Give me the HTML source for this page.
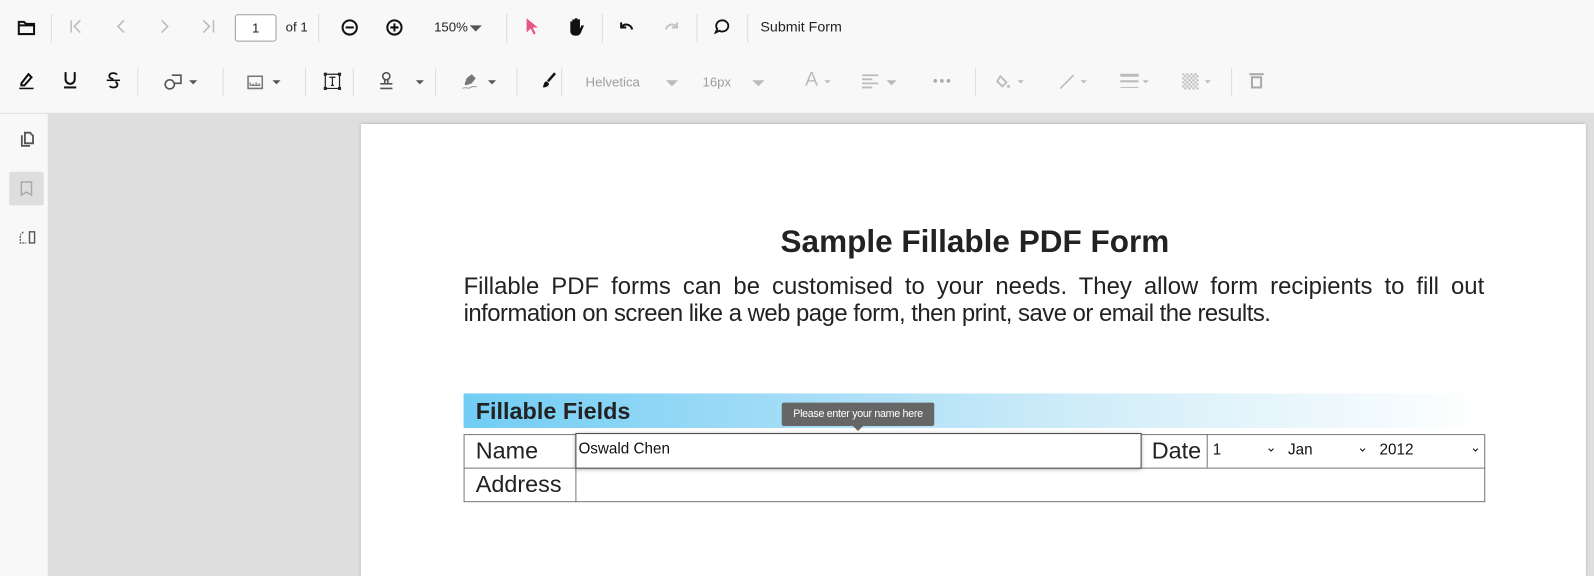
<!DOCTYPE html>
<html><head><meta charset="utf-8"><style>
*{box-sizing:border-box;margin:0;padding:0}
body{width:1594px;height:567px;overflow:hidden;background:#dedede;font-family:"Liberation Sans",Arial,sans-serif;position:relative}
#w{position:absolute;left:0;top:0;width:1568px;height:558px;transform:scale(1.01659);transform-origin:0 0}
.tb{position:absolute;left:0;top:0;width:1568px;height:111px;background:#f8f8f8}
.a{position:absolute}
.sep{position:absolute;width:1px;height:28px;background:#dcdcdc}
.gt{color:#9e9e9e;font-size:13px}
svg{position:absolute;overflow:visible}
.caret{position:absolute;width:0;height:0;border-left:4px solid transparent;border-right:4px solid transparent;border-top:4px solid #555}
.caretl{border-top-color:#bbb}
</style></head><body><div id="w">
<div class="tb">
<svg style="left:17px;top:19px" width="18" height="16"><path d="M1.5 2.5h5l2 2h8v10h-15z M1.5 6h15" fill="none" stroke="#111" stroke-width="2"/></svg>
<div class="sep" style="left:50px;top:14px"></div>
<svg style="left:68px;top:19px" width="14" height="14"><path d="M2 1v12 M11 1l-6 6 6 6" fill="none" stroke="#bbb" stroke-width="1.5"/></svg>
<svg style="left:113px;top:19px" width="14" height="14"><path d="M9 1l-6 6 6 6" fill="none" stroke="#bbb" stroke-width="1.5"/></svg>
<svg style="left:155px;top:19px" width="14" height="14"><path d="M4 1l6 6-6 6" fill="none" stroke="#bbb" stroke-width="1.5"/></svg>
<svg style="left:198px;top:19px" width="14" height="14"><path d="M12 1v12 M2 1l6 6-6 6" fill="none" stroke="#bbb" stroke-width="1.5"/></svg>
<div class="a" style="left:231px;top:14px;width:41px;height:27px;border:1px solid #9e9e9e;border-radius:3px;background:#fff;font-size:13px;text-align:center;line-height:25px;color:#222">1</div>
<div class="a" style="left:281px;top:19px;font-size:13px;color:#222">of 1</div>
<div class="sep" style="left:313px;top:14px"></div>
<svg style="left:335px;top:18px" width="18" height="18"><circle cx="9" cy="9" r="7" fill="none" stroke="#111" stroke-width="2"/><path d="M5 9h8" stroke="#111" stroke-width="2"/></svg>
<svg style="left:379px;top:18px" width="18" height="18"><circle cx="9" cy="9" r="7" fill="none" stroke="#111" stroke-width="2"/><path d="M5 9h8M9 5v8" stroke="#111" stroke-width="2"/></svg>
<div class="a" style="left:427px;top:19px;font-size:13px;color:#222">150%</div>
<div class="caret" style="left:462px;top:25px;border-width:6px 6px 0 6px"></div>
<div class="sep" style="left:498px;top:14px"></div>
<svg style="left:517px;top:17px" width="14" height="18"><path d="M1 1l11 9h-5l3 6-2 1-3-6-4 4z" fill="#e8558a"/></svg>
<svg style="left:558px;top:16px" width="18" height="20"><path d="M3 10V5h2v5V3h2.5v7V2H10v8V3h2.5v9l1.5-3h2.5l-3 7c-1 2-2 3-4 3H7c-2 0-4-2-4-4z" fill="#111"/></svg>
<div class="sep" style="left:592px;top:14px"></div>
<svg style="left:609px;top:20px" width="16" height="14"><path d="M2 2v5h5 M2.5 6.5C5 3 11 3 13 9" fill="none" stroke="#111" stroke-width="2"/></svg>
<svg style="left:652px;top:20px" width="16" height="14"><path d="M14 2v5h-5 M13.5 6.5C11 3 5 3 3 9" fill="none" stroke="#c4c4c4" stroke-width="2"/></svg>
<div class="sep" style="left:685px;top:14px"></div>
<svg style="left:702px;top:18px" width="17" height="17"><path d="M8.5 2a6 5.5 0 1 1-3 10.3L2 14l1.5-3.5A6 5.5 0 0 1 8.5 2z" fill="none" stroke="#111" stroke-width="1.8"/></svg>
<div class="sep" style="left:735px;top:14px"></div>
<div class="a" style="left:748px;top:18px;font-size:14px;color:#222">Submit Form</div>
<svg style="left:18px;top:70px" width="16" height="18"><path d="M3 12l7-9 3 3-7 8H3z" fill="none" stroke="#111" stroke-width="2"/><path d="M1 17h14" stroke="#111" stroke-width="1.5"/></svg>
<svg style="left:62px;top:70px" width="14" height="18"><path d="M2.5 1v7a4.5 4.5 0 0 0 9 0V1" fill="none" stroke="#111" stroke-width="2"/><path d="M1 16h12" stroke="#111" stroke-width="2"/></svg>
<svg style="left:104px;top:70px" width="15" height="18"><path d="M11 3.5C10 1.5 4 1 3.5 4.5c-.3 2.5 3 3 4 3.5 M4 14.5c1 2 7 2.5 7.5-1 .2-1.5-1-2.5-2-3" fill="none" stroke="#111" stroke-width="1.8"/><path d="M1 9h13" stroke="#111" stroke-width="1.5"/></svg>
<div class="sep" style="left:135px;top:67px"></div>
<svg style="left:161px;top:72px" width="20" height="18"><circle cx="6" cy="11" r="4.5" fill="none" stroke="#555" stroke-width="1.6"/><path d="M8 2h9v8H10.5" fill="none" stroke="#555" stroke-width="1.6"/></svg>
<div class="caret" style="left:186px;top:79px"></div>
<div class="sep" style="left:219px;top:67px"></div>
<svg style="left:243px;top:74px" width="16" height="14"><path d="M1 1h14v12H1z" fill="none" stroke="#777" stroke-width="1.5"/><path d="M3 10v-3M6 10v-2M9 10v-3M12 10v-2M3 10h10" stroke="#777" stroke-width="1.2"/></svg>
<div class="caret" style="left:268px;top:79px"></div>
<div class="sep" style="left:300px;top:67px"></div>
<svg style="left:318px;top:71px" width="18" height="18"><path d="M2 2h14v14H2z" fill="none" stroke="#222" stroke-width="1.2"/><path d="M6 5h6M9 5v8M7.5 13h3" stroke="#222" stroke-width="1.2"/><rect x="0.5" y="0.5" width="3" height="3" fill="#222"/><rect x="14.5" y="0.5" width="3" height="3" fill="#222"/><rect x="0.5" y="14.5" width="3" height="3" fill="#222"/><rect x="14.5" y="14.5" width="3" height="3" fill="#222"/></svg>
<div class="sep" style="left:347px;top:67px"></div>
<svg style="left:372px;top:70px" width="16" height="19"><circle cx="8" cy="5" r="3.5" fill="none" stroke="#555" stroke-width="1.6"/><path d="M6.5 8.5v4h3v-4M2 12.5h12M2 17h12" fill="none" stroke="#555" stroke-width="1.6"/></svg>
<div class="caret" style="left:409px;top:79px"></div>
<div class="sep" style="left:428px;top:67px"></div>
<svg style="left:453px;top:70px" width="22" height="19"><path d="M4 13l2-6 5-4 4 4-4 5-6 2z" fill="#777"/><path d="M2 17c3-2 5 1 8-1s4 0 6-1" fill="none" stroke="#999" stroke-width="1"/></svg>
<div class="caret" style="left:480px;top:79px"></div>
<div class="sep" style="left:508px;top:67px"></div>
<svg style="left:532px;top:70px" width="16" height="18"><path d="M14 2L7 10" stroke="#111" stroke-width="2.5"/><path d="M6 10c-3 0-3 3-4 6 3 0 6-1 6-4z" fill="#111"/></svg>
<div class="sep" style="left:552px;top:67px"></div>
<div class="a gt" style="left:576px;top:73px">Helvetica</div>
<div class="caret caretl" style="left:655px;top:79px;border-width:6px 6px 0 6px"></div>
<div class="a gt" style="left:691px;top:73px">16px</div>
<div class="caret caretl" style="left:740px;top:79px;border-width:6px 6px 0 6px"></div>
<div class="a" style="left:792px;top:68px;color:#bbb;font-size:19px">A</div>
<div class="caret caretl" style="left:811px;top:79px;border-width:3px 3px 0 3px"></div>
<svg style="left:848px;top:72px" width="16" height="16"><path d="M0 2h16M0 6h10M0 10h16M0 14h10" stroke="#bbb" stroke-width="1.8"/></svg>
<div class="caret caretl" style="left:872px;top:79px;border-width:5px 5px 0 5px"></div>
<svg style="left:918px;top:77px" width="18" height="5"><circle cx="2" cy="2.5" r="1.8" fill="#aaa"/><circle cx="8.5" cy="2.5" r="1.8" fill="#aaa"/><circle cx="15" cy="2.5" r="1.8" fill="#aaa"/></svg>
<div class="sep" style="left:959px;top:67px"></div>
<svg style="left:980px;top:71px" width="16" height="18"><path d="M4 4l6 6-4 4-5-5z" fill="none" stroke="#bbb" stroke-width="1.8"/><circle cx="12" cy="14" r="1.5" fill="#bbb"/></svg>
<div class="caret caretl" style="left:1001px;top:79px;border-width:3px 3px 0 3px"></div>
<svg style="left:1042px;top:72px" width="16" height="16"><path d="M1 15L14 2" stroke="#bbb" stroke-width="1.6"/></svg>
<div class="caret caretl" style="left:1063px;top:79px;border-width:3px 3px 0 3px"></div>
<svg style="left:1102px;top:72px" width="18" height="18"><path d="M0 2h18" stroke="#bbb" stroke-width="3"/><path d="M0 8h18" stroke="#bbb" stroke-width="2"/><path d="M0 14h18" stroke="#bbb" stroke-width="1"/></svg>
<div class="caret caretl" style="left:1124px;top:79px;border-width:3px 3px 0 3px"></div>
<svg style="left:1163px;top:72px" width="16" height="16"><defs><pattern id="ck" width="4" height="4" patternUnits="userSpaceOnUse"><rect width="2" height="2" fill="#bbb"/><rect x="2" y="2" width="2" height="2" fill="#bbb"/></pattern></defs><rect width="16" height="16" fill="url(#ck)"/></svg>
<div class="caret caretl" style="left:1185px;top:79px;border-width:3px 3px 0 3px"></div>
<div class="sep" style="left:1211px;top:67px"></div>
<svg style="left:1229px;top:71px" width="14" height="16"><path d="M0 2h14" stroke="#aaa" stroke-width="2"/><path d="M2.5 5h9v10h-9z" fill="none" stroke="#aaa" stroke-width="2"/></svg>
</div>
<div class="a" style="left:0;top:112px;width:47px;height:455px;background:#f8f8f8"></div>
<svg style="left:20px;top:129px" width="15" height="16"><path d="M4.5 1.5h5l3 3V12h-8z" fill="none" stroke="#555" stroke-width="1.8"/><path d="M1.5 4v10.5h8" fill="none" stroke="#555" stroke-width="1.8"/></svg>
<div class="a" style="left:9px;top:169px;width:34px;height:33px;background:#dedede;border-radius:2px"></div>
<svg style="left:20px;top:178px" width="12" height="15"><path d="M1 1h10v13l-5-3-5 3z" fill="none" stroke="#aaa" stroke-width="1.5"/></svg>
<svg style="left:19px;top:227px" width="17" height="13"><path d="M10 1h5v11h-5z" fill="none" stroke="#555" stroke-width="1.4"/><path d="M1 5v7h6M4 1L1 4" fill="none" stroke="#555" stroke-width="1.2" stroke-dasharray="2 1"/></svg>
<div class="a" style="left:355px;top:122px;width:1205px;height:445px;background:#fff;box-shadow:0 0 3px rgba(0,0,0,.25)"></div>
<div class="a" style="left:355px;top:220px;width:1208px;text-align:center;font-size:31px;font-weight:bold;color:#222">Sample Fillable PDF Form</div>
<div class="a" style="left:456px;top:268px;width:1004px;font-size:23.5px;color:#222;text-align:justify;text-align-last:justify;white-space:nowrap;word-spacing:2px">Fillable PDF forms can be customised to your needs. They allow form recipients to fill out</div>
<div class="a" style="left:456px;top:295px;font-size:23.5px;color:#222;letter-spacing:-0.5px;white-space:nowrap">information on screen like a web page form, then print, save or email the results.</div>
<div class="a" style="left:456px;top:387px;width:1004px;height:34px;background:linear-gradient(90deg,#71cdf4 0%,#a8def7 35%,#d6eff9 65%,#fff 100%)"></div>
<div class="a" style="left:468px;top:391px;font-size:23px;font-weight:bold;color:#222">Fillable Fields</div>
<div class="a" style="left:456px;top:427px;width:1005px;height:67px;border:1px solid #777"></div>
<div class="a" style="left:456px;top:460px;width:1005px;height:1px;background:#777"></div>
<div class="a" style="left:566px;top:427px;width:1px;height:67px;background:#777"></div>
<div class="a" style="left:1187px;top:427px;width:1px;height:33px;background:#777"></div>
<div class="a" style="left:468px;top:430px;font-size:23px;color:#222">Name</div>
<div class="a" style="left:468px;top:463px;font-size:23px;color:#222">Address</div>
<div class="a" style="left:1133px;top:430px;font-size:23px;color:#222">Date</div>
<div class="a" style="left:566px;top:426px;width:557px;height:35px;border:1px solid #444;box-shadow:0 1px 4px rgba(0,0,0,.4);background:#fff"></div>
<div class="a" style="left:569px;top:433px;font-size:15px;color:#111">Oswald Chen</div>
<div class="a" style="left:1193px;top:434px;font-size:15px;color:#111">1</div>
<div class="a" style="left:1245px;top:432px;font-size:13px;color:#111">⌄</div>
<div class="a" style="left:1267px;top:434px;font-size:15px;color:#111">Jan</div>
<div class="a" style="left:1335px;top:432px;font-size:13px;color:#111">⌄</div>
<div class="a" style="left:1357px;top:434px;font-size:15px;color:#111">2012</div>
<div class="a" style="left:1446px;top:432px;font-size:13px;color:#111">⌄</div>
<div class="a" style="left:769px;top:396px;width:150px;height:23px;background:#666;border-radius:2px;color:#fff;font-size:10.5px;letter-spacing:-0.3px;text-align:center;line-height:23px;white-space:nowrap">Please enter your name here</div>
<div class="a" style="left:839px;top:419px;border-left:5px solid transparent;border-right:5px solid transparent;border-top:5px solid #666"></div>
</div></body></html>
